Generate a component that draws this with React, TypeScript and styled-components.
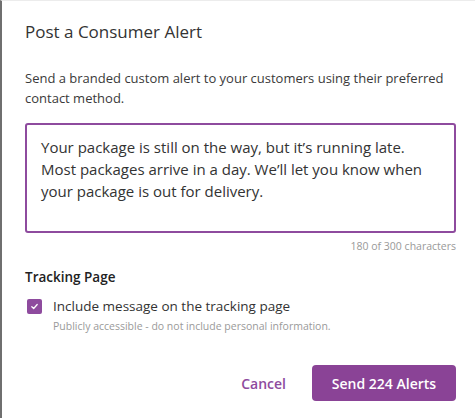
import React from "react";
import styled, { createGlobalStyle } from "styled-components";

const Global = createGlobalStyle`
  html, body { margin: 0; padding: 0; background: #ffffff; }
  body { font-family: "Open Sans", "Liberation Sans", Arial, sans-serif; }
`;

const Page = styled.div`
  width: 475px;
  height: 418px;
  box-sizing: border-box;
  border-left: 2px solid #6f6f6f;
  border-top: 1px solid #ececec;
  background: #fff;
  padding: 21px 19px 0 23px;
`;

const Title = styled.h1`
  margin: 0;
  font-size: 17px;
  font-weight: 500;
  color: #333;
  line-height: 20px;
`;

const Desc = styled.p`
  margin: 26px 0 0;
  font-size: 13px;
  line-height: 20px;
  color: #3a3a3a;
`;

const TextArea = styled.div`
  margin-top: 15px;
  height: 110px;
  box-sizing: border-box;
  border: 2px solid #8e4b9e;
  border-radius: 3px;
  padding: 11px 14px;
  font-size: 15px;
  line-height: 22px;
  color: #333;
`;

const Counter = styled.div`
  margin-top: 6px;
  text-align: right;
  font-size: 10.5px;
  color: #999;
  line-height: 14px;
`;

const Section = styled.h2`
  margin: 15px 0 0;
  font-size: 13.5px;
  font-weight: 600;
  color: #222;
  line-height: 18px;
`;

const CheckRow = styled.label`
  display: flex;
  align-items: center;
  gap: 11px;
  margin-top: 11px;
  padding-left: 2px;
  font-size: 13.5px;
  color: #333;
`;

const Box = styled.span`
  width: 15px;
  height: 15px;
  border-radius: 2px;
  background: #8e4b9e;
  display: flex;
  align-items: center;
  justify-content: center;
`;

const Help = styled.div`
  margin: 4px 0 0 28px;
  font-size: 10.5px;
  color: #9a9a9a;
  line-height: 14px;
`;

const Actions = styled.div`
  margin-top: 32px;
  display: flex;
  justify-content: flex-end;
  align-items: center;
  gap: 26px;
`;

const Cancel = styled.button`
  border: 0;
  background: none;
  padding: 0;
  font-family: inherit;
  font-size: 14px;
  font-weight: 600;
  color: #8e4b9e;
`;

const Primary = styled.button`
  border: 0;
  background: #8a4396;
  color: #fff;
  font-family: inherit;
  font-size: 14px;
  font-weight: 600;
  width: 144px;
  height: 36px;
  border-radius: 4px;
`;

export default function App() {
  return (
    <>
      <Global />
      <Page>
        <Title>Post a Consumer Alert</Title>
        <Desc>
          Send a branded custom alert to your customers using their preferred
          contact method.
        </Desc>
        <TextArea>
          Your package is still on the way, but it’s running late. Most
          packages arrive in a day. We’ll let you know when your package is out
          for delivery.
        </TextArea>
        <Counter>180 of 300 characters</Counter>
        <Section>Tracking Page</Section>
        <CheckRow>
          <Box>
            <svg width="9" height="9" viewBox="0 0 10 10">
              <path d="M2 5.2 L4.1 7.2 L8 2.8" fill="none" stroke="#fff" strokeWidth="1.4" strokeLinecap="round" strokeLinejoin="round" />
            </svg>
          </Box>
          Include message on the tracking page
        </CheckRow>
        <Help>Publicly accessible - do not include personal information.</Help>
        <Actions>
          <Cancel>Cancel</Cancel>
          <Primary>Send 224 Alerts</Primary>
        </Actions>
      </Page>
    </>
  );
}
